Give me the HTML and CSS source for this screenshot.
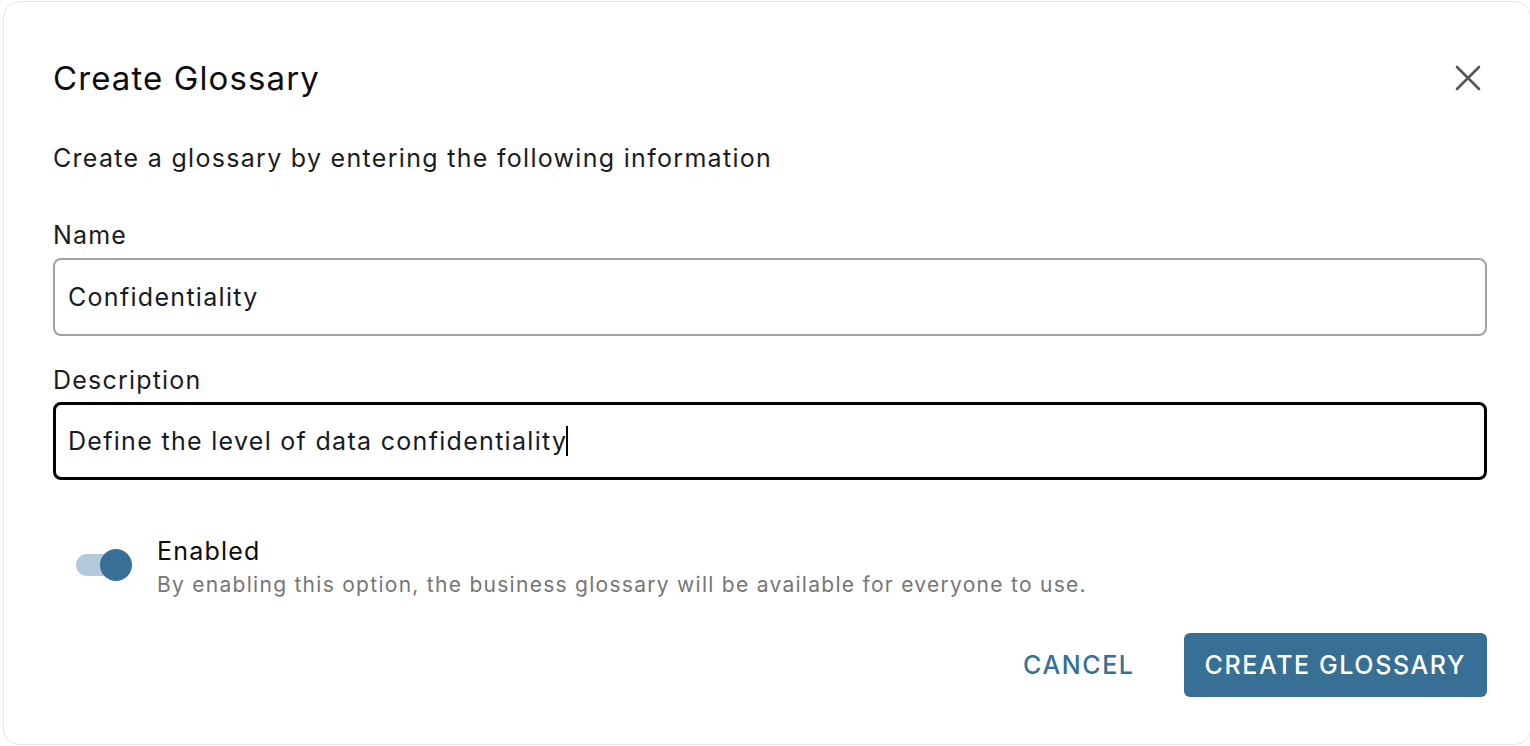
FILE: index.html
```html
<!DOCTYPE html>
<html lang="en">
<head>
<meta charset="utf-8">
<title>Create Glossary</title>
<link rel="stylesheet" href="styles.css">
</head>
<body>
<div class="dialog" role="dialog" aria-labelledby="dlg-title">
  <div class="header">
    <h2 class="title" id="dlg-title">Create Glossary</h2>
    <button class="close" aria-label="Close">
      <svg width="32" height="32" viewBox="0 0 32 32" aria-hidden="true">
        <path d="M5 5 L27 27 M27 5 L5 27" stroke="#555555" stroke-width="2.6" stroke-linecap="round" fill="none"/>
      </svg>
    </button>
  </div>
  <p class="subtitle">Create a glossary by entering the following information</p>
  <label class="label label-name" for="name">Name</label>
  <div class="input input-idle" id="name">Confidentiality</div>
  <label class="label label-desc" for="desc">Description</label>
  <div class="input input-focus" id="desc">Define the level of data confidentiality<span class="caret"></span></div>
  <div class="toggle-row">
    <div class="switch"><span class="track"></span><span class="thumb"></span></div>
    <div class="toggle-text">
      <div class="toggle-title">Enabled</div>
      <div class="toggle-help">By enabling this option, the business glossary will be available for everyone to use.</div>
    </div>
  </div>
  <div class="actions">
    <button class="btn btn-text">CANCEL</button>
    <button class="btn btn-primary">CREATE GLOSSARY</button>
  </div>
</div>
</body>
</html>
```
FILE: styles.css
```css
html, body {
  margin: 0;
  padding: 0;
  background: #ffffff;
}
body {
  font-family: Inter, "Noto Sans", sans-serif;
  color: #111111;
  overflow: hidden;
}
.dialog {
  box-sizing: border-box;
  margin: 1px 0 0 3px;
  width: 1528px;
  height: 744px;
  border: 1px solid #e3e7ee;
  border-radius: 16px;
  padding: 56px 43px 0 49px;
  display: flex;
  flex-direction: column;
}
.header {
  display: flex;
  justify-content: space-between;
  align-items: center;
  height: 40px;
}
.title {
  margin: 0;
  font-size: 33px;
  font-weight: 400;
  line-height: 40px;
  letter-spacing: 1.1px;
  color: #0d0d0d;
}
.close {
  border: 0;
  background: none;
  padding: 0;
  margin-right: 3px;
  width: 32px;
  height: 32px;
  display: flex;
  cursor: pointer;
}
.subtitle {
  margin: 44px 0 0;
  font-size: 25px;
  line-height: 32px;
  letter-spacing: 1.3px;
  color: #1c1c1c;
}
.label {
  display: block;
  font-size: 25px;
  line-height: 32px;
  letter-spacing: 1.2px;
  color: #1c1c1c;
}
.label-name { margin-top: 45px; }
.label-desc { margin-top: 28px; }
.input {
  box-sizing: border-box;
  height: 78px;
  border-radius: 8px;
  padding: 0 13px;
  display: flex;
  align-items: center;
  font-size: 25px;
  letter-spacing: 1.3px;
  color: #161b26;
}
.input-idle {
  margin-top: 7px;
  border: 2px solid #a2a2a2;
}
.input-focus {
  margin-top: 6px;
  border: 3px solid #000000;
  padding-left: 12px;
}
.caret {
  display: inline-block;
  width: 2px;
  height: 30px;
  background: #000;
  margin-left: -1px;
}
.toggle-row {
  display: flex;
  align-items: flex-start;
  margin-top: 55px;
  padding-left: 23px;
  gap: 29px;
}
.switch {
  position: relative;
  width: 52px;
  height: 22px;
  margin-top: 19px;
  flex: none;
}
.track {
  display: block;
  width: 52px;
  height: 22px;
  border-radius: 11px;
  background: #b1c9d8;
}
.thumb {
  position: absolute;
  left: 24px;
  top: -5px;
  width: 32px;
  height: 32px;
  border-radius: 50%;
  background: #386f95;
}
.toggle-title {
  font-size: 25px;
  line-height: 32px;
  letter-spacing: 1.2px;
  color: #0d0d0d;
}
.toggle-help {
  margin-top: 4px;
  font-size: 21px;
  line-height: 28px;
  letter-spacing: 1.28px;
  color: #767676;
}
.actions {
  display: flex;
  justify-content: flex-end;
  gap: 28px;
  margin-top: 34px;
}
.btn {
  font-family: Inter, "Noto Sans", sans-serif;
  font-size: 25px;
  font-weight: 500;
  height: 64px;
  padding: 0 21px;
  border: 0;
  border-radius: 6px;
  letter-spacing: 1.6px;
  cursor: pointer;
}
.btn-text {
  background: none;
  color: #386f95;
}
.btn-primary {
  background: #386f95;
  color: #ffffff;
}
```
